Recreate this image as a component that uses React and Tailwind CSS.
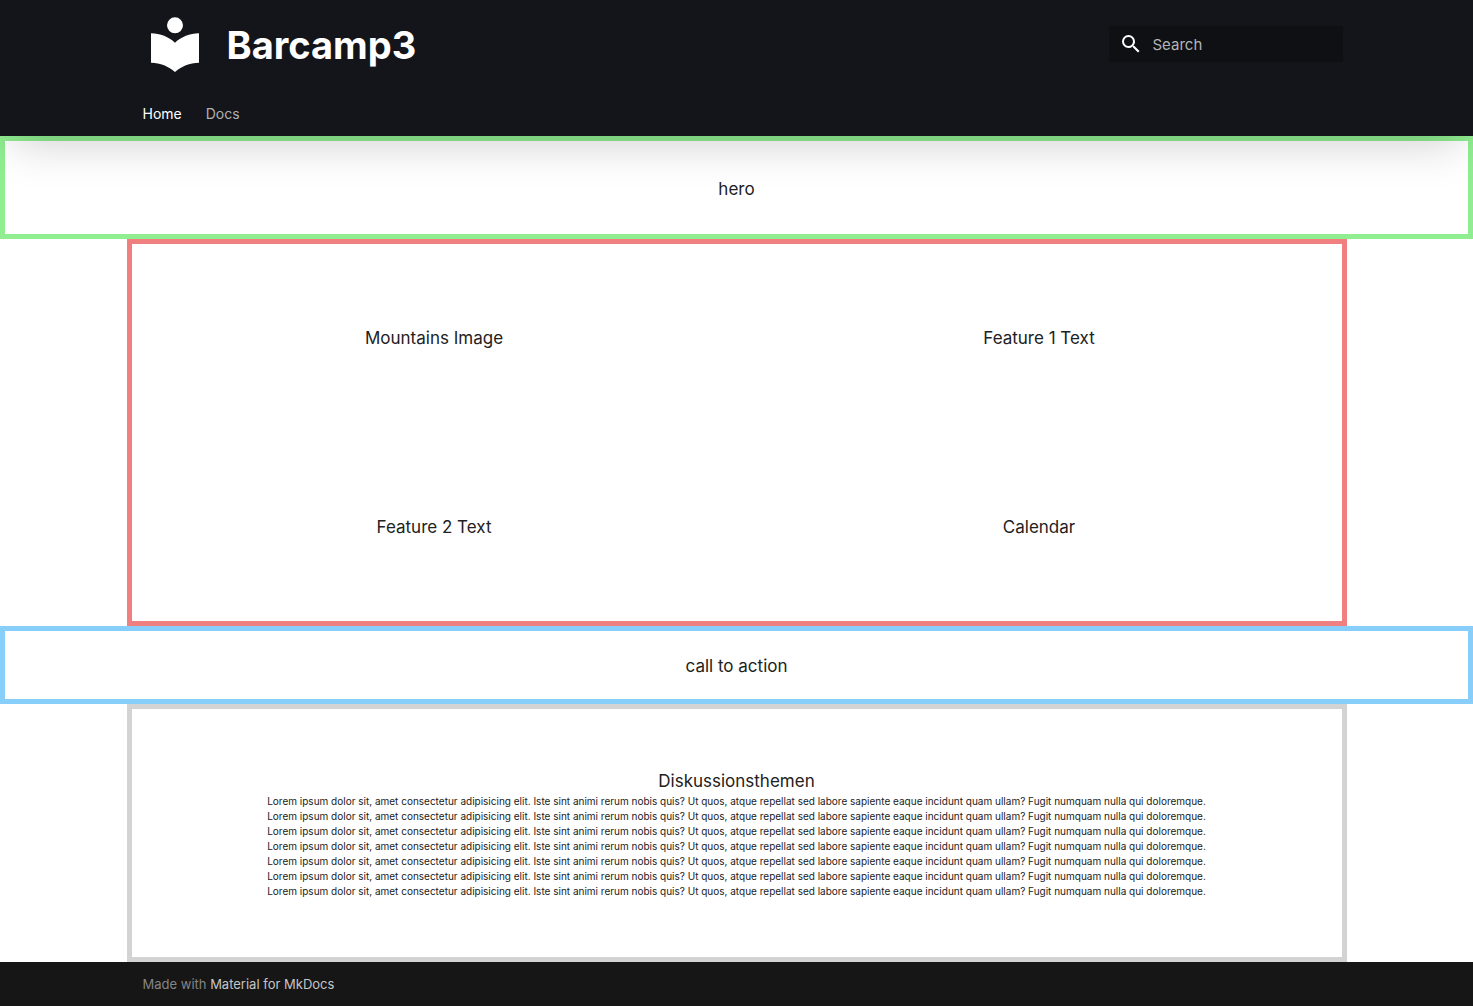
const themes = Array.from({ length: 7 }, (_, i) => i);

function Logo() {
  return (
    <svg viewBox="0 0 24 24" className="size-16" fill="currentColor" aria-hidden="true">
      <path d="M12 8a3 3 0 0 0 3-3 3 3 0 0 0-3-3 3 3 0 0 0-3 3 3 3 0 0 0 3 3m0 3.54C9.64 9.35 6.5 8 3 8v11c3.5 0 6.64 1.35 9 3.54 2.36-2.19 5.5-3.54 9-3.54V8c-3.5 0-6.64 1.35-9 3.54Z" />
    </svg>
  );
}

function Header() {
  return (
    <header className="relative z-10 h-34 bg-[#14151a] text-white shadow-[0_16px_48px_-12px_rgba(0,0,0,0.22)]">
      <div className="mx-auto max-w-[1220px] px-4">
        <div className="flex h-[88px] items-center justify-between">
          <a href="#home" className="flex items-center gap-5">
            <Logo />
            <span className="pt-0.5 text-[38px] font-bold leading-12">Barcamp3</span>
          </a>
          <label className="-mr-3 flex h-9 w-[234px] items-center gap-2.5 rounded-xs bg-[#0f1013] pl-2.5">
            <svg viewBox="0 0 24 24" className="size-6" fill="currentColor" aria-hidden="true">
              <path d="M9.5 3A6.5 6.5 0 0 1 16 9.5c0 1.61-.59 3.09-1.56 4.23l.27.27h.79l5 5-1.5 1.5-5-5v-.79l-.27-.27A6.516 6.516 0 0 1 9.5 16 6.5 6.5 0 0 1 3 9.5 6.5 6.5 0 0 1 9.5 3m0 2C7 5 5 7 5 9.5S7 14 9.5 14 14 12 14 9.5 12 5 9.5 5Z" />
            </svg>
            <input aria-label="Search" placeholder="Search" className="w-40 bg-transparent pt-0.5 text-[15px] outline-none placeholder:text-[#b4b4b6]" />
          </label>
        </div>
        <nav className="flex gap-6 pt-4 text-sm">
          <a href="#home">Home</a>
          <a href="#docs" className="text-[#b0b0b2]">Docs</a>
        </nav>
      </div>
    </header>
  );
}

export default function App() {
  return (
    <div className="flex min-h-screen flex-col bg-white font-['Inter',sans-serif] text-[17px] leading-7 text-[#212121]">
      <Header />
      <main className="flex flex-col">
        <section className="flex h-[103px] items-center justify-center border-5 border-[#90ee90] pt-0.5">hero</section>
        <section className="mx-auto grid h-[387px] w-full max-w-[1220px] grid-cols-2 grid-rows-2 place-items-center border-5 border-[#f08080]">
          <p>Mountains Image</p>
          <p>Feature 1 Text</p>
          <p>Feature 2 Text</p>
          <p>Calendar</p>
        </section>
        <section className="flex h-[78px] items-center justify-center border-5 border-[#87cefa] pt-0.5">call to action</section>
        <section className="mx-auto flex h-[258px] w-full max-w-[1220px] flex-col items-center justify-center border-5 border-[#d3d3d3]">
          <h2 className="leading-[26px]">Diskussionsthemen</h2>
          {themes.map((i) => (
            <p key={i} className="text-[10px] leading-[15px]">
              Lorem ipsum dolor sit, amet consectetur adipisicing elit. Iste sint animi rerum nobis quis? Ut quos, atque repellat sed labore sapiente eaque incidunt quam ullam? Fugit numquam nulla qui doloremque.
            </p>
          ))}
        </section>
      </main>
      <footer className="grow bg-[#161616] text-[13px] text-[#858585]">
        <div className="mx-auto max-w-[1220px] px-4 py-3 leading-5">
          Made with <a href="#mkdocs" className="text-[#c5c5c5]">Material for MkDocs</a>
        </div>
      </footer>
    </div>
  );
}
